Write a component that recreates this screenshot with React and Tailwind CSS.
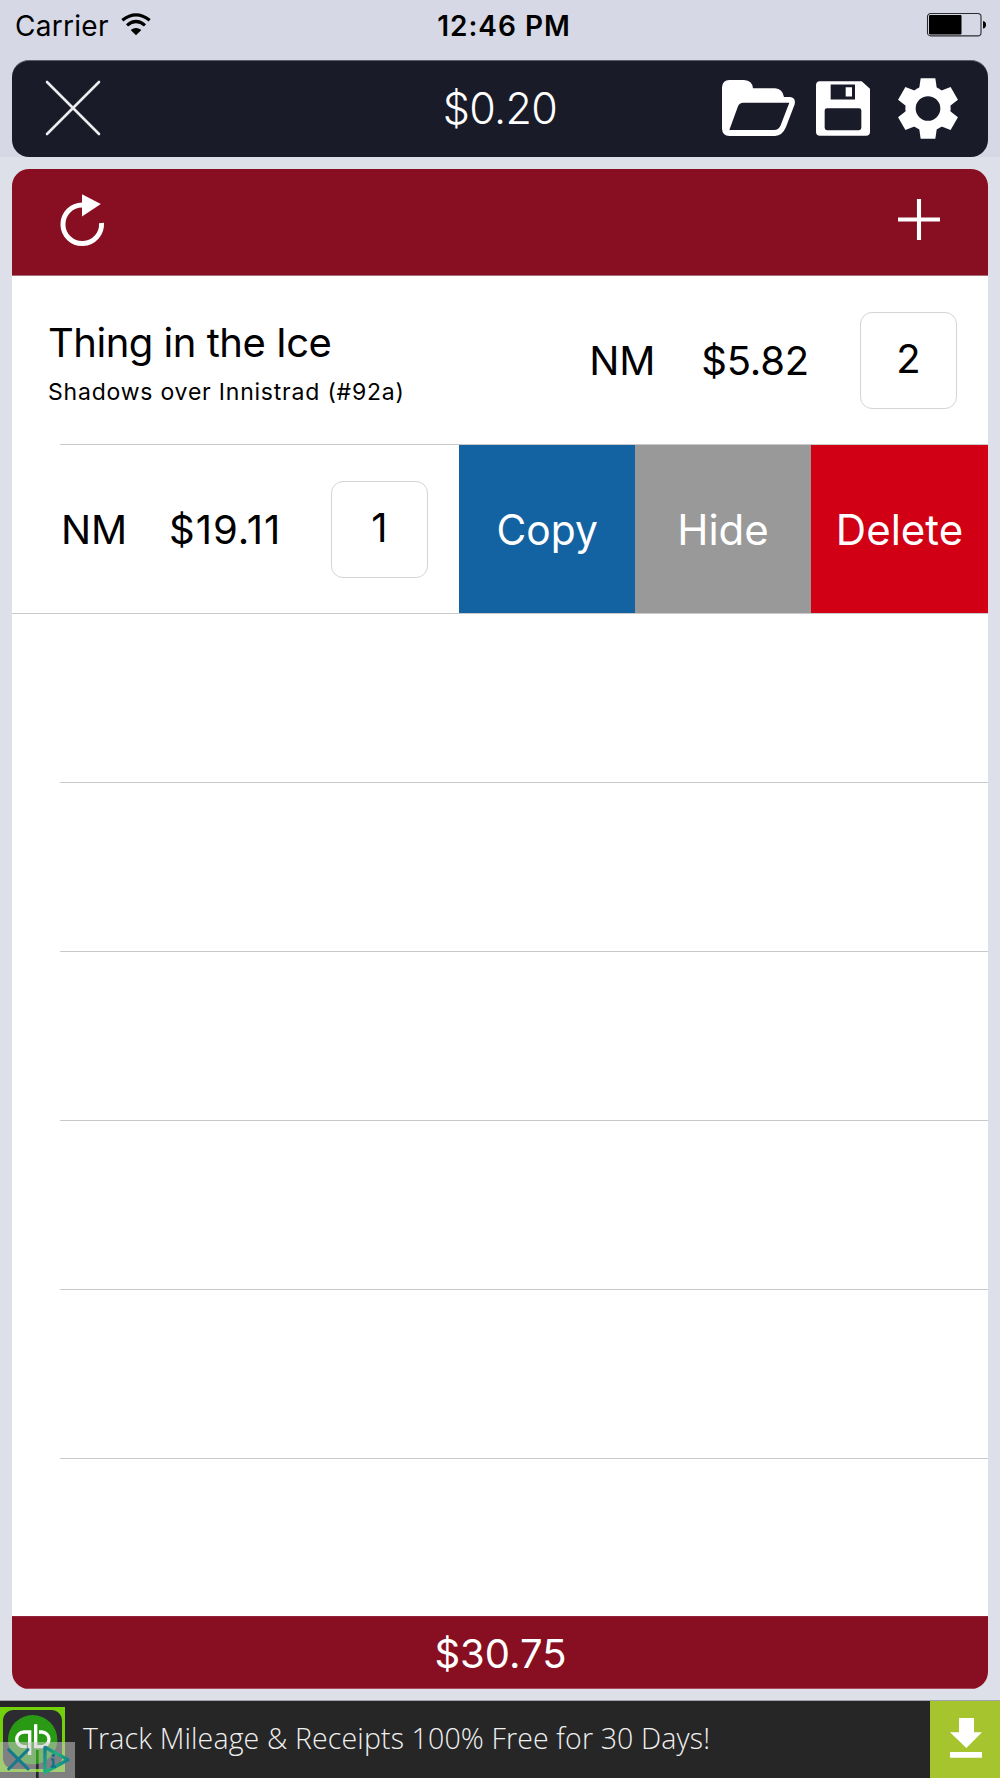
function WifiIcon() {
  return (
    <svg className="h-[23px] w-[30px]" viewBox="362 37 90 69" fill="none">
      <path d="M366 59 Q407 26 448 59" stroke="#000" strokeWidth="9.5" />
      <path d="M380 74 Q407 51 434 74" stroke="#000" strokeWidth="9.5" />
      <path d="M391 88 Q407 76 423 88 L407 104 Z" fill="#000" />
    </svg>
  );
}

function BatteryIcon() {
  return (
    <svg className="h-[25px] w-[61px]" viewBox="0 0 61 25" fill="none">
      <rect x="1.5" y="1.5" width="53.5" height="22.4" rx="3.2" stroke="#2b2c30" strokeWidth="1.1" />
      <rect x="3" y="3" width="32.5" height="19.4" rx="1" fill="#000" />
      <path d="M57 9 Q60 9.500 60 12.700 Q60 16 57 16.500 Z" fill="#000" />
    </svg>
  );
}

function CloseIcon() {
  return (
    <svg className="h-[56px] w-[56px]" viewBox="0 0 56 56">
      <path d="M2 2 L54 54 M54 2 L2 54" stroke="#ececee" strokeWidth="2.6" strokeLinecap="round" />
    </svg>
  );
}

function FolderIcon() {
  return (
    <svg className="h-[56px] w-[73px]" viewBox="96 242 219 168">
      <path
        fill="#fff"
        fillRule="evenodd"
        d="M96 264 Q97 243 118 242 H162 Q187 243 189 267 H255 Q278 269 282 293 H300 Q318 295 314 315 L288 383 Q277 409 255 410 H118 Q97 409 96 388 Z M160 310 H298 L272 378 Q267 392 252 392 H118 L144 321 Q148 310 160 310 Z"
      />
    </svg>
  );
}

function SaveIcon() {
  return (
    <svg className="h-[55px] w-[54px]" viewBox="378 244 162 164">
      <path
        fill="#fff"
        fillRule="evenodd"
        d="M390 244 H515 L540 267 V396 Q540 408 528 408 H390 Q378 408 378 396 V256 Q378 244 390 244 Z M422 254 H495 V299 H422 Z M467 262 V290 H486 V262 Z M411 325 Q404 325 404 332 V384 Q404 391 411 391 H507 Q514 391 514 384 V332 Q514 325 507 325 Z"
      />
    </svg>
  );
}

function GearIcon() {
  return (
    <svg className="h-[61px] w-[60px]" viewBox="-90 -91 180 182">
      <circle r="52.500" fill="none" stroke="#fff" strokeWidth="31" />
      {[0, 60, 120, 180, 240, 300].map((angle) => (
        <path key={angle} transform={`rotate(${angle})`} d="M-27 -56 L-22 -91 H22 L27 -56 Z" fill="#fff" />
      ))}
    </svg>
  );
}

function RefreshIcon() {
  return (
    <svg className="h-[54px] w-[46px]" viewBox="0 0 46 54">
      <path d="M41.500 30 A19.300 19.300 0 1 1 22.300 12" fill="none" stroke="#fff" strokeWidth="5" />
      <path d="M22 1.200 L40.800 11 L22 23.500 Z" fill="#fff" />
    </svg>
  );
}

function PlusIcon() {
  return (
    <svg className="h-[42px] w-[42px]" viewBox="0 0 42 42">
      <path d="M21 0 V41 M0 20.500 H42" stroke="#fff" strokeWidth="4.100" />
    </svg>
  );
}

function AdBadge() {
  return (
    <svg className="h-[77px] w-[75px] shrink-0" viewBox="0 303 225 231" fill="none">
      <defs>
        <linearGradient id="choice" x1="0" y1="0" x2="1" y2="0.600">
          <stop offset="0" stopColor="#157f8c" />
          <stop offset="0.500" stopColor="#22b27c" />
          <stop offset="1" stopColor="#12808c" />
        </linearGradient>
      </defs>
      <rect y="321" width="195" height="195" fill="#73d10b" />
      <rect x="9" y="330" width="177" height="177" rx="32" fill="#2c2b31" />
      <circle cx="98" cy="419" r="74" fill="#2a9a14" />
      <path d="M89 396 H72 a22 22 0 0 0 0 44 H80 M89 391 V465" stroke="#fff" strokeWidth="10" />
      <path d="M107 373 V440 H125 a22 22 0 0 0 0 -44 H117" stroke="#fff" strokeWidth="10" />
      <path d="M0 426 H225 V534 H116 V450 H108 V534 H0 Z" fill="#c8c8c8" fillOpacity="0.550" />
      <path d="M26 449 L84 507 M84 449 L26 507" stroke="#147a8c" strokeWidth="9" strokeLinecap="round" />
      <path d="M135 442 L204 479 L135 517 Z" stroke="url(#choice)" strokeWidth="10" strokeLinejoin="round" />
      <path d="M153 478 H160 V499 M152 500 H168" stroke="#14708c" strokeWidth="7" />
      <circle cx="160" cy="466" r="5" fill="#14708c" />
    </svg>
  );
}

function DownloadIcon() {
  return (
    <svg className="h-[40px] w-[32px]" viewBox="750 354 96 120">
      <path d="M777 354 H822 V397 H846 L799 444 L750 397 H777 Z M750 456 H846 V473 H750 Z" fill="#fff" />
    </svg>
  );
}

function QuantityBox({ children }) {
  return (
    <div className="flex h-[97px] w-[97px] shrink-0 items-center justify-center rounded-[12px] border border-[#d4d4d4] pb-[3px]">
      {children}
    </div>
  );
}

function Separator() {
  return <div className="ml-12 h-px shrink-0 bg-[#c9c9cb]" />;
}

export default function App() {
  return (
    <div className="flex h-[1778px] w-[1000px] flex-col bg-[#dde0e9] font-['Inter',sans-serif] leading-none whitespace-nowrap text-black">
      <div className="h-[157px] shrink-0 bg-[#d6d8e5]">
        <div className="grid h-[60px] grid-cols-[1fr_auto_1fr] items-start pt-3">
          <div className="flex items-start pl-[15px]">
            <span className="text-[28px] tracking-[0.290px]">Carrier</span>
            <span className="mt-px ml-3">
              <WifiIcon />
            </span>
          </div>
          <div className="ml-2 text-[28px] font-semibold tracking-[1px]">12:46 PM</div>
          <div className="flex justify-end pr-[13px]">
            <BatteryIcon />
          </div>
        </div>
        <div className="mx-3 grid h-[97px] grid-cols-[1fr_auto_1fr] items-center rounded-[17px] border-t border-[#5b5d6c] bg-[#1a1b29] pb-[2px] text-white">
          <div className="pl-[33px]">
            <CloseIcon />
          </div>
          <div className="text-[43px] font-[350] tracking-[-0.660px]">$0.20</div>
          <div className="flex items-center justify-end pr-[30px]">
            <FolderIcon />
            <span className="ml-[21px]">
              <SaveIcon />
            </span>
            <span className="ml-7">
              <GearIcon />
            </span>
          </div>
        </div>
      </div>

      <div className="mx-3 mt-3 flex h-[1520px] shrink-0 flex-col overflow-hidden rounded-[17px] bg-white">
        <div className="flex h-[107px] shrink-0 items-start justify-between border-b border-[#a3707a] bg-[#870f21] pr-12 pl-12">
          <span className="mt-[24px]">
            <RefreshIcon />
          </span>
          <span className="mt-[30px]">
            <PlusIcon />
          </span>
        </div>

        <div className="flex h-[168px] shrink-0 items-center pr-[31px] pl-9">
          <div className="flex flex-col self-start pt-[47px]">
            <span className="text-[40px] tracking-[-0.500px]">Thing in the Ice</span>
            <span className="mt-[18px] text-[23px] tracking-[0.790px]">Shadows over Innistrad (#92a)</span>
          </div>
          <div className="ml-auto pt-[2px] text-[40px] tracking-[-0.140px]">NM</div>
          <div className="ml-[46px] pt-[2px] text-[40px] tracking-[-0.190px]">$5.82</div>
          <div className="ml-[51px] text-[40px]">
            <QuantityBox>2</QuantityBox>
          </div>
        </div>
        <Separator />

        <div className="flex h-[168px] shrink-0 items-center pl-[49px]">
          <div className="pt-[2px] text-[40px] tracking-[-0.140px]">NM</div>
          <div className="ml-[42px] w-[162px] pt-[2px] text-[40px] tracking-[1px]">$19.11</div>
          <div className="text-[40px]">
            <QuantityBox>1</QuantityBox>
          </div>
          <div className="ml-auto grid h-full w-[529px] grid-cols-[176px_176px_177px] text-[42px] text-white">
            <div className="flex items-center justify-center bg-[#1363a3] pt-[2px]">
              <span className="scale-x-[0.970]">Copy</span>
            </div>
            <div className="flex items-center justify-center bg-[#999999] pt-[2px]">
              <span>Hide</span>
            </div>
            <div className="flex items-center justify-center bg-[#d20014] pt-[2px]">
              <span>Delete</span>
            </div>
          </div>
        </div>
        <div className="h-px shrink-0 bg-[#c9c9cb]" />

        {[0, 1, 2, 3, 4].map((row) => (
          <div key={row} className="flex h-[169px] shrink-0 flex-col justify-end">
            <Separator />
          </div>
        ))}

        <div className="mt-auto flex h-[73px] shrink-0 items-center justify-center border-t border-b border-t-[#90233a] border-b-[#a84a5c] bg-[#870f21] pt-[2px] pl-px text-[40px] text-white">
          $30.75
        </div>
      </div>

      <div className="mt-auto flex h-[78px] shrink-0 items-center border-t border-[#a3a5ad] bg-[#262626]">
        <AdBadge />
        <div className="ml-2 pb-[2px] font-['Open_Sans',sans-serif] text-[28.500px] font-light tracking-[0.140px] text-[#f0f0f0]">
          Track Mileage &amp; Receipts 100% Free for 30 Days!
        </div>
        <div className="ml-auto flex h-full w-[70px] items-start bg-[#a5c42e] pt-[17px] pl-5">
          <DownloadIcon />
        </div>
      </div>
    </div>
  );
}
